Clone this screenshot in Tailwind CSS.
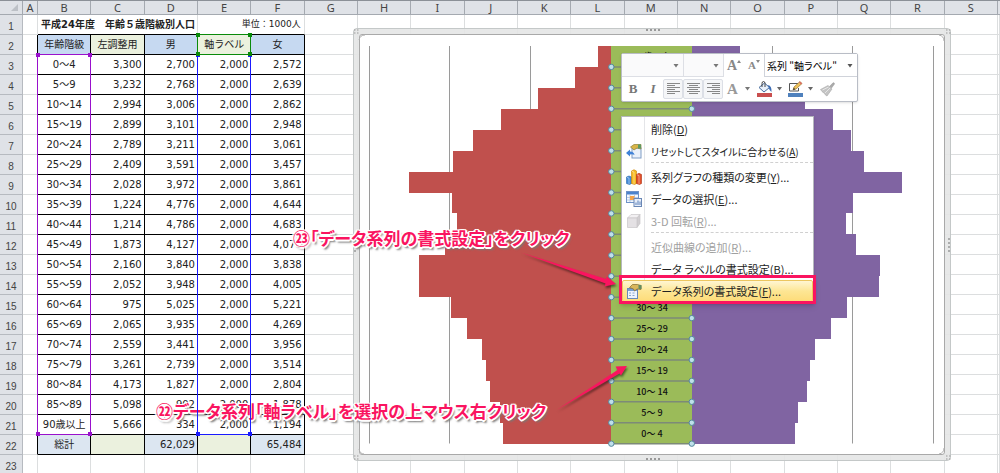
<!DOCTYPE html>
<html lang="ja">
<head>
    <meta charset="UTF-8">
    <meta name="viewport" content="width=device-width, initial-scale=1.0">
    <title>年齢５歳階級別人口</title>
    <script src="https://cdn.jsdelivr.net/npm/@tailwindcss/browser@4"></script>
</head>
<body class="bg-white text-[#222]">
<main class="relative h-screen overflow-hidden font-['DejaVu_Sans','Noto_Sans_CJK_JP',sans-serif] text-[10px]">

    <!-- Worksheet -->
    <table class="w-full table-fixed border-separate border-spacing-0 leading-none whitespace-nowrap border-t border-[#8b9097]">
        <colgroup id="cols">
            <col class="w-[23px]">
            <col class="w-[15px]">
        </colgroup>
        <thead>
            <tr id="letters" class="h-[14px] bg-[#dfe2e7] font-['Noto_Sans','Noto_Sans_CJK_JP',sans-serif] text-[11px] text-[#444]"></tr>
        </thead>
        <tbody id="sheet"></tbody>
    </table>

    <!-- Chart object -->
    <section class="absolute left-[353px] top-[28px] h-[433px] w-[598px] rounded-[4px] border border-[#c4c8c8] bg-[#e4e6e6]/90 p-[5px]" aria-label="グラフ">
        <div class="h-full rounded-[3px] border border-[#a9a9a9] bg-white"></div>
    </section>
    <svg id="chart" class="absolute left-[353px] top-[28px] font-['Noto_Sans_CJK_JP',sans-serif]" width="598" height="433" viewBox="353 28 598 433"></svg>

    <!-- Mini toolbar -->
    <div class="absolute left-[621px] top-[53px] flex h-[49px] w-[237px] flex-col rounded-[2px] border border-[#b9bdc6] bg-white shadow-sm" role="toolbar" aria-label="ミニ ツール バー">
        <div class="flex h-[23px] items-center">
            <label class="relative h-full w-[62px] border-r border-b border-[#dddfe5] bg-[#fafafb]">
                <select class="h-full w-full appearance-none bg-transparent" aria-label="フォント"><option></option></select>
                <svg class="pointer-events-none absolute right-1 top-[10px]" width="6" height="4"><path d="M0.5 0h5L3 3.5z" fill="#777"/></svg>
            </label>
            <label class="relative h-full w-[40px] border-r border-b border-[#dddfe5] bg-[#fafafb]">
                <select class="h-full w-full appearance-none bg-transparent" aria-label="フォント サイズ"><option></option></select>
                <svg class="pointer-events-none absolute right-1 top-[10px]" width="6" height="4"><path d="M0.5 0h5L3 3.5z" fill="#777"/></svg>
            </label>
            <button class="flex w-5 items-center justify-center font-['Liberation_Serif',serif] text-[14px] font-bold text-[#888]" aria-label="フォントの拡大">A<svg class="mb-2" width="4" height="3"><path d="M0 3h4L2 0z" fill="#888"/></svg></button>
            <button class="flex w-5 items-center justify-center font-['Liberation_Serif',serif] text-[11px] font-bold text-[#888]" aria-label="フォントの縮小">A<svg class="mb-2" width="4" height="3"><path d="M0 0h4L2 3z" fill="#888"/></svg></button>
            <label class="relative h-full flex-1 border-b border-l border-[#d0d3da]">
                <select class="h-full w-full appearance-none bg-white pl-[2px] font-['Noto_Sans_CJK_JP',sans-serif] text-[10px] text-black [font-feature-settings:'palt']" aria-label="グラフ要素"><option>系列 "軸ラベル"</option></select>
                <svg class="pointer-events-none absolute right-1 top-[10px]" width="6" height="4"><path d="M0.5 0h5L3 3.5z" fill="#555"/></svg>
            </label>
        </div>
        <div class="flex flex-1 items-center pl-[1px] font-['Liberation_Serif',serif] text-[#777]">
            <button class="w-5 text-[13px] font-bold">B</button>
            <button class="w-5 text-[13px] font-bold italic">I</button>
            <button class="flex h-5 w-5 items-center justify-center rounded-[2px] border border-[#dcdfe6] bg-[#f5f6f8]" aria-label="左揃え">
                <svg width="13" height="12" stroke="#888"><path d="M0 .5h13M0 2.5h8M0 4.5h13M0 6.5h8M0 8.5h13M0 10.5h8"/></svg>
            </button>
            <button class="flex h-5 w-5 items-center justify-center rounded-[2px] border border-[#dcdfe6] bg-[#f5f6f8]" aria-label="中央揃え">
                <svg width="13" height="12" stroke="#888"><path d="M0 .5h13M2 2.5h9M0 4.5h13M2 6.5h9M0 8.5h13M2 10.5h9"/></svg>
            </button>
            <button class="flex h-5 w-5 items-center justify-center rounded-[2px] border border-[#dcdfe6] bg-[#f5f6f8]" aria-label="右揃え">
                <svg width="13" height="12" stroke="#888"><path d="M0 .5h13M5 2.5h8M0 4.5h13M5 6.5h8M0 8.5h13M5 10.5h8"/></svg>
            </button>
            <button class="flex w-[31px] items-center justify-center gap-[7px] text-[15px] font-bold text-[#999]" aria-label="フォントの色">A
                <svg width="5" height="4"><path d="M0 0h5L2.500 3.500z" fill="#777"/></svg>
            </button>
            <button class="flex w-[31px] items-center justify-center gap-[5px]" aria-label="塗りつぶし">
                <svg width="15" height="16" viewBox="0 0 15 16">
                    <rect y="12" width="15" height="4" fill="#c94f4f"/>
                    <path d="M2 6.500L7.500 2l5 4.500L7 11z" fill="#e8f0fa" stroke="#456a9c"/>
                    <path d="M5 6V2.500Q5 .5 6.500 .5T8 2.500V6" fill="none" stroke="#444"/>
                    <path d="M11 4q4 1 3.500 7Q12.500 10 11.500 6z" fill="#3c6cb4"/>
                </svg>
                <svg width="5" height="4"><path d="M0 0h5L2.500 3.500z" fill="#666"/></svg>
            </button>
            <button class="flex w-[31px] items-center justify-center gap-[5px]" aria-label="枠線">
                <svg width="15" height="16" viewBox="0 0 15 16">
                    <rect y="12" width="15" height="4" fill="#4f81bd"/>
                    <path d="M10 2.500H1.500v7.500h9V7" fill="none" stroke="#555"/>
                    <path d="M5 9l1-3 6-5.500 2 2L8 8z" fill="#efc45a" stroke="#9a7434" stroke-width=".7"/>
                    <path d="M5 9l.8-2.200L7.300 8.300z" fill="#333"/>
                    <path d="M11 1.400l1-.9 2 2-1 .9z" fill="#d66"/>
                </svg>
                <svg width="5" height="4"><path d="M0 0h5L2.500 3.500z" fill="#666"/></svg>
            </button>
            <button class="flex w-[22px] items-center justify-center" aria-label="書式のコピー">
                <svg width="15" height="15" viewBox="0 0 15 15">
                    <path d="M9.500 4.500L13 .8q1.500-.3 1.500 1.200L11.500 6z" fill="#aaa" stroke="#999" stroke-width=".5"/>
                    <path d="M.5 7.500L8 3.500l4 3.500-5 7q-1.500-.5-2.500-2.500Q1.500 9.500.5 7.500z" fill="#c4c4c4" stroke="#aaa" stroke-width=".6"/>
                    <path d="M2.500 8l6-3M5 11l5-5" stroke="#e6e6e6"/>
                </svg>
            </button>
        </div>
    </div>

    <!-- Context menu -->
    <ul class="absolute left-[621px] top-[116px] w-[193px] border border-[#b5b8bd] bg-[linear-gradient(to_right,#fff_22px,#e4e5e8_22px,#e4e5e8_23px,#fff_23px)] pt-[1px] font-['Noto_Sans_CJK_JP',sans-serif] text-[11px] whitespace-nowrap text-[#222] shadow-sm [font-feature-settings:'palt']" role="menu">
        <li><button class="flex h-[22px] w-full items-center pl-[29px]" role="menuitem">削除(<u>D</u>)</button></li>
        <li><button class="flex h-[22px] w-full items-center pl-[4px] text-[10px]" role="menuitem">
            <svg class="mr-[9px] shrink-0" width="16" height="16" viewBox="0 0 16 16">
                <rect x="6" y="5" width="9" height="10" fill="#eaf1fb" stroke="#7f9cc4"/>
                <path d="M4.500 4L8 1.500h7V6L11 5 8 7z" fill="#d9b548" stroke="#8f7f35" stroke-width=".7"/>
                <path d="M12 1.500h3v4h-3z" fill="#5c9a63"/>
                <path d="M0 10l4-3.500v2q4 0 4.500 3.500Q7 11 4 11.500v2z" fill="#3f82d8"/>
            </svg>リセットしてスタイルに合わせる(<u>A</u>)</button></li>
        <li class="ml-[29px] h-[4px] border-t border-dashed border-[#d0d0d0]" role="separator"></li>
        <li><button class="flex h-[22px] w-full items-center pl-[4px]" role="menuitem">
            <svg class="mr-[9px] shrink-0" width="16" height="16" viewBox="0 0 16 16">
                <path d="M.5 8v6.500l3 1 2-1V8l-2.500-1z" fill="#4289d8" stroke="#2767a9" stroke-width=".6"/>
                <path d="M5.500 2v12.500l3 1 2-1V2L8 .7z" fill="#f6b920" stroke="#c9850c" stroke-width=".6"/>
                <path d="M10.500 5.500v9l3 1 2-1v-9L13 4.300z" fill="#e3502a" stroke="#ab2f13" stroke-width=".6"/>
                <path d="M1 8.300l2 .7v6M6 2.300l2 .7v12M11 5.800l2 .7v8.500" fill="none" stroke="#fff" stroke-opacity=".45"/>
            </svg>系列グラフの種類の変更(<u>Y</u>)...</button></li>
        <li><button class="flex h-[22px] w-full items-center pl-[4px]" role="menuitem">
            <svg class="mr-[9px] shrink-0" width="16" height="16" viewBox="0 0 16 16">
                <rect x=".5" y=".5" width="12" height="11" fill="#f4f8fd" stroke="#6e92c8"/>
                <path d="M1 1h11v2.500H1z" fill="#4c83cd"/>
                <path d="M4 4v7M8.500 4v7M1 6.500h11M1 9h11" stroke="#a9c0e2" stroke-width=".8"/>
                <path d="M4 5h4.500v4H4z" fill="#f5a54a"/>
                <rect x="8" y="7.500" width="7.500" height="8" fill="#e8effa" stroke="#6a87b5"/>
                <path d="M10 14v-2.500M12 14v-4.500M14 14v-3.500" stroke="#587fb9"/>
            </svg>データの選択(<u>E</u>)...</button></li>
        <li><button class="flex h-[22px] w-full items-center pl-[4px] text-[#a0a0a0]" role="menuitem" disabled>
            <svg class="mr-[9px] shrink-0" width="16" height="16" viewBox="0 0 16 16" stroke="#c9c5c9" stroke-width=".7">
                <path d="M1.500 5l3.500-3.500h9L11 5z" fill="#f2f0f2"/>
                <path d="M11 5l3-3.500v9L11 14.500z" fill="#d1ced1"/>
                <path d="M1.500 5H11v9.500H1.500z" fill="#e4e1e4"/>
            </svg>3-D 回転(<u>R</u>)...</button></li>
        <li class="ml-[29px] h-[4px] border-t border-dashed border-[#d0d0d0]" role="separator"></li>
        <li><button class="flex h-[22px] w-full items-center pl-[29px] text-[#a0a0a0]" role="menuitem" disabled>近似曲線の追加(<u>R</u>)...</button></li>
        <li><button class="flex h-[22px] w-full items-center pl-[29px]" role="menuitem">データ ラベルの書式設定(<u>B</u>)...</button></li>
        <li><button class="flex h-[22px] w-full items-center rounded-[2px] border border-[#ecc65f] bg-linear-to-b from-[#fff6d2] via-[#fde694] to-[#fddc79] pl-[3px]" role="menuitem">
            <svg class="mr-[9px] shrink-0" width="16" height="16" viewBox="0 0 16 16">
                <rect x="1.500" y="5.500" width="10" height="10" fill="#edf4fd" stroke="#6889b8"/>
                <path d="M2 6h9v2H2z" fill="#759dd2"/>
                <path d="M3 10h2M6.500 10h2M3 12.500h2M6.500 12.500h2" stroke="#89a7d0"/>
                <path d="M3.500 4.500L6.500 1.500h5l3.500 1v4l-4-.5-2.500 2-1-2z" fill="#d9b75b" stroke="#80692d" stroke-width=".7"/>
                <path d="M12.500 2h3v4h-3z" fill="#628c62"/>
            </svg>データ系列の書式設定(<u>F</u>)...</button></li>
    </ul>
    <div class="absolute left-[619px] top-[275px] h-[29px] w-[197px] border-[3px] border-[#fa1460] shadow-md"></div>

    <!-- Step notes and arrows -->
    <svg class="pointer-events-none absolute left-[550px] top-[355px] overflow-visible drop-shadow-[1px_2px_1px_rgba(0,0,0,0.5)]" width="80" height="60" viewBox="550 355 80 60">
        <path d="M556.500 410L617.500 370 615.500 366.500 627 366 621 375.500 619.500 373.500z" fill="#fa1460"/>
    </svg>
    <svg class="pointer-events-none absolute left-[515px] top-[248px] overflow-visible drop-shadow-[1px_2px_1px_rgba(0,0,0,0.5)]" width="105" height="42" viewBox="515 248 105 42">
        <path d="M521 252.500L606 279 607 276.500 616 284 604.500 286.500 605.500 283.500z" fill="#fa1460"/>
    </svg>
    <p class="absolute left-[293px] top-[226px] whitespace-nowrap font-['Noto_Sans_CJK_JP',sans-serif] text-[17px] leading-6 font-bold text-[#fa1460] [font-feature-settings:'palt'] [text-shadow:-1px_-1px_0_#fff,1px_-1px_0_#fff,-1px_1px_0_#fff,1px_1px_0_#fff,0_2px_0_#fff,2px_0_0_#fff,-2px_0_0_#fff,2px_3px_2px_#777]">㉓「データ系列の書式設定」をクリック</p>
    <p class="absolute left-[156px] top-[399px] whitespace-nowrap font-['Noto_Sans_CJK_JP',sans-serif] text-[17px] leading-6 font-bold text-[#fa1460] [font-feature-settings:'palt'] [text-shadow:-1px_-1px_0_#fff,1px_-1px_0_#fff,-1px_1px_0_#fff,1px_1px_0_#fff,0_2px_0_#fff,2px_0_0_#fff,-2px_0_0_#fff,2px_3px_2px_#777]">㉒データ系列「軸ラベル」を選択の上マウス右クリック</p>
</main>

<script>
    const data = [
        ['0～4', 2700, 2572], ['5～9', 2768, 2639], ['10～14', 3006, 2862], ['15～19', 3101, 2948],
        ['20～24', 3211, 3061], ['25～29', 3591, 3457], ['30～34', 3972, 3861], ['35～39', 4776, 4644],
        ['40～44', 4786, 4683], ['45～49', 4127, 4076], ['50～54', 3840, 3838], ['55～59', 3948, 4005],
        ['60～64', 5025, 5221], ['65～69', 3935, 4269], ['70～74', 3441, 3956], ['75～79', 2739, 3514],
        ['80～84', 1827, 2804], ['85～89', 902, 1878], ['90歳以上', 334, 1194]
    ];
    const letters = 'ABCDEFGHIJKLMNOPQRS'.split('');
    const fmt = n => n.toLocaleString('en-US');

    // columns B to S share the width, T is cut off by the window
    document.getElementById('cols').innerHTML += '<col>'.repeat(18) + '<col class="w-[2px]">';
    document.getElementById('letters').innerHTML =
        '<th class="border-r border-b border-[#a4a9b0] p-0"><svg class="ml-auto mr-1" width="7" height="7"><path d="M7 0v7H0z" fill="#bcc0c6"/></svg></th>' +
        letters.map(l => `<th class="border-r border-b border-[#a4a9b0] p-0 font-normal">${l}</th>`).join('') +
        '<th class="border-b border-[#a4a9b0] p-0"></th>';

    // coloured range frames of the selected series
    const handle = (color, pos) => `<i class="absolute size-1 ${color} ${pos}"></i>`;
    const handles = color =>
        handle(color, '-left-[2px] -top-[2px]') + handle(color, '-right-[2px] -top-[2px]') +
        handle(color, '-left-[2px] -bottom-[2px]') + handle(color, '-right-[2px] -bottom-[2px]');
    const purple = `<div class="absolute -inset-x-px -top-px z-10 h-[381px] border border-[#9911cc]">${handles('bg-[#9911cc]')}</div>`;
    const blue = `<div class="absolute -inset-x-px -top-px z-10 h-[381px] border border-[#1a1aff]">${handles('bg-[#1a1aff]')}</div>`;
    const green = `<div class="absolute -inset-px z-20 border border-[#0a8a0a]">${handles('bg-[#0a8a0a]')}</div>`;

    // every cell draws its right and bottom line only
    const blank = n => '<td class="border-r border-b border-[#dcdedf] p-0"></td>'.repeat(n);
    const row = (n, cells, h = 'h-5') =>
        `<tr class="${h}"><th class="border-r border-b border-[#b6bac0] bg-[#dfe2e7] p-0 pt-1 font-['Liberation_Sans',sans-serif] font-normal text-[#444]">${n}</th>${cells}</tr>`;
    const edge = '<td class="border-r border-b border-r-black border-b-[#dcdedf] p-0"></td>';
    const cell = (text, cls, extra = '') => `<td class="relative border-r border-b border-black p-0 ${cls}">${text}${extra}</td>`;

    let html = row(1, blank(1) +
        '<td colspan="3" class="border-r border-b border-r-[#dcdedf] border-b-black p-0 pl-[3px] font-bold">平成24年度　年齢５歳階級別人口</td>' +
        '<td colspan="2" class="border-r border-b border-r-[#dcdedf] border-b-black p-0 pr-[3px] text-right text-[9px]">単位：1000人</td>' + blank(14));
    html += row(2, edge +
        cell('年齢階級', 'bg-[#c6d9f1] text-center') + cell('左調整用', 'bg-[#ebf1de] text-center') +
        cell('男', 'bg-[#c6d9f1] text-center') + cell('軸ラベル', 'bg-[#ebf1de] text-center', green) +
        cell('女', 'bg-[#c6d9f1] text-center') + blank(14));
    data.forEach(([age, men, women], i) => {
        html += row(i + 3, edge +
            cell(age, 'text-center', i === 0 ? purple : '') + cell(fmt(6000 - men), 'pr-[2px] text-right') +
            cell(fmt(men), 'pr-[2px] text-right') + cell('2,000', 'pr-[2px] text-right', i === 0 ? blue : '') +
            cell(fmt(women), 'pr-[2px] text-right') + blank(14));
    });
    html += row(22, edge +
        cell('総計', 'bg-[#dce6f1] text-center') + cell('', 'bg-[#ebf1de]') + cell('62,029', 'bg-[#dce6f1] pr-[2px] text-right') +
        cell('', 'bg-[#ebf1de]') + cell('65,484', 'bg-[#dce6f1] pr-[2px] text-right') + blank(14));
    html += row(23, blank(20));
    document.getElementById('sheet').innerHTML = html;

    // population pyramid, youngest at the bottom
    const top0 = 46, step = 20.93, scale = 0.04025, mid = 611.3, right = 691.8;
    let svg = '';
    [369.5, 449.5, 530.5, 772.5, 852.5, 933.5].forEach(x => {
        svg += `<path d="M${x} ${top0}V443.500" stroke="#9a9a9a"/>`;
    });
    const bottom = top0 + step * data.length;
    let marks = '';
    data.forEach(([age, men, women], i) => {
        const y = bottom - step * (i + 1);
        const label = age.replace('～', '〜 ');
        svg += `<g shape-rendering="crispEdges"><rect x="${mid - men * scale}" y="${y}" width="${men * scale}" height="${step}" fill="#c0504d"/>`;
        svg += `<rect x="${right}" y="${y}" width="${women * scale}" height="${step}" fill="#8064a2"/>`;
        svg += `<rect x="${mid}" y="${y}" width="${right - mid}" height="${step}" fill="#9bbb59"/></g>`;
        svg += `<text x="652" y="${y + 14}" text-anchor="middle" font-size="9" font-weight="500" fill="#111">${label}</text>`;
        const ly = y + step;
        marks += `<path d="M${mid} ${ly}H${right}" stroke="#7d8a78" stroke-width="1.500"/>`;
        [mid, right].forEach(x => {
            marks += `<circle cx="${x}" cy="${ly}" r="2.700" fill="#bfe0ea" stroke="#55889c"/>`;
        });
    });
    svg += marks;
    // grips on the chart frame
    [[646, 30], [646, 459]].forEach(([x, y]) => {
        svg += `<path d="M${x} ${y}h14" stroke="#999" stroke-width="2" stroke-dasharray="2 2"/>`;
    });
    [[355, 238], [949, 238]].forEach(([x, y]) => {
        svg += `<path d="M${x} ${y}v14" stroke="#999" stroke-width="1.500" stroke-dasharray="2 2"/>`;
    });
    [[354, 31], [946, 31], [354, 457], [946, 457]].forEach(([x, y]) => {
        svg += `<path d="M${x} ${y - 1}h5M${x} ${y + 2}h5" stroke="#999" stroke-dasharray="1.500 1.500"/>`;
    });
    svg += '<path d="M359 40q1-5 6-5M939 35q5 1 5 6M359 449q1 5 5 5M939 454q5-1 5-6" fill="none" stroke="#b0b0b0"/>';
    document.getElementById('chart').innerHTML = svg;
</script>
</body>
</html>
